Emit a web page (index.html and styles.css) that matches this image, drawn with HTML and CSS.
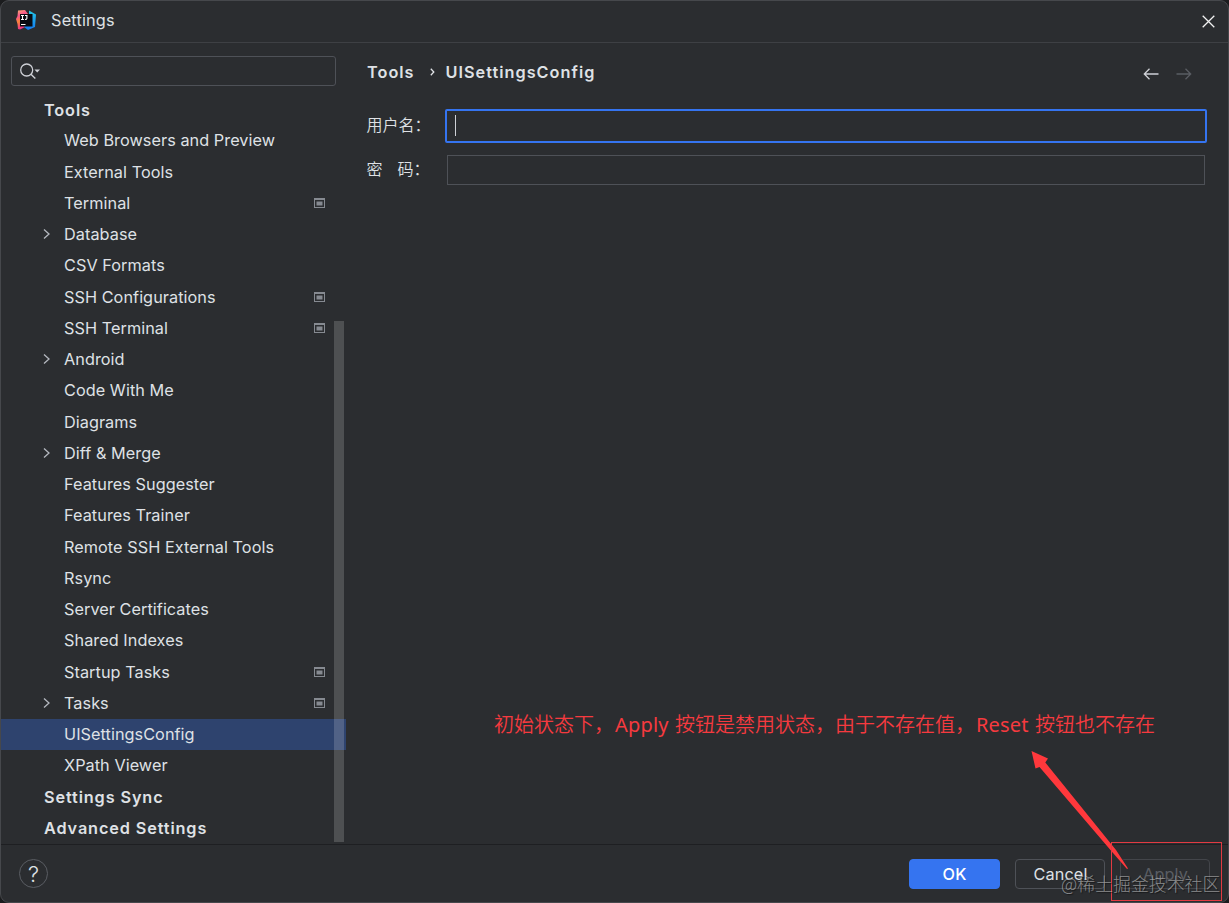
FILE: index.html
```html
<!DOCTYPE html>
<html lang="en">
<head>
<meta charset="utf-8">
<title>Settings</title>
<link rel="stylesheet" href="styles.css">
</head>
<body>
<svg class="defs" width="0" height="0">
  <symbol id="chevron" viewBox="0 0 10 12"><path d="M2 1.500 7 6 2 10.500" fill="none" stroke="#b4b8bf" stroke-width="1.300"/></symbol>
  <symbol id="project" viewBox="0 0 11 10"><path d="M0 0h11v10H0zM1 2v7h9V2z" fill="#868a91" fill-rule="evenodd"/><path d="M2.500 3.500h6v4h-6z" fill="#868a91"/></symbol>
</svg>
<div class="window">
  <header class="titlebar">
    <svg class="logo" viewBox="0 0 20 20">
      <defs>
        <linearGradient id="warm" x1="0" y1="0" x2="0.3" y2="1"><stop offset="0" stop-color="#fdb66c"/><stop offset=".35" stop-color="#f5548c"/><stop offset=".6" stop-color="#f98538"/><stop offset="1" stop-color="#ee2f8c"/></linearGradient>
        <linearGradient id="cool" x1="0" y1="0" x2="0" y2="1"><stop offset="0" stop-color="#23c8e8"/><stop offset="1" stop-color="#1479ef"/></linearGradient>
      </defs>
      <path d="M2 .5 9 0 12 4 11 16 4 19.500 2 19 1.500 14 0 9 1.500 6z" fill="url(#warm)"/>
      <path d="M13 .5 20 4.500 19 17 12 20 8 17 13 10z" fill="url(#cool)"/>
      <path d="M4 4h12.500v12.500H4z" fill="#080b12"/>
      <path d="M5 5.500H8M6.500 5.500V9.500M5 9.500H8M9 5.500H11.500M10.900 5.500V8.500q0 1-1.900 1M5 14.500H9.500" fill="none" stroke="#fff" stroke-width="1.100"/>
    </svg>
    <span class="title">Settings</span>
    <svg class="close" viewBox="0 0 13 13"><path d="M.7.7 12.300 12.300M12.300.7.7 12.300" stroke="#f2f2f2" stroke-width="1.300"/></svg>
  </header>
  <main class="body">
    <aside class="sidebar">
      <div class="search"><svg viewBox="0 0 22 18"><circle cx="7.700" cy="7" r="6" fill="none" stroke="#ced0d6" stroke-width="1.300"/><path d="m12 11.300 4.300 4.300" stroke="#ced0d6" stroke-width="1.400"/><path d="M15.500 6.500H21L18.200 9.500z" fill="#ced0d6"/></svg></div>
      <div class="tree">
        <div class="row group first"><span>Tools</span></div>
        <div class="row"><span>Web Browsers and Preview</span></div>
        <div class="row"><span>External Tools</span></div>
        <div class="row"><span>Terminal</span><svg class="mark"><use href="#project"/></svg></div>
        <div class="row parent"><svg class="chev"><use href="#chevron"/></svg><span>Database</span></div>
        <div class="row"><span>CSV Formats</span></div>
        <div class="row"><span>SSH Configurations</span><svg class="mark"><use href="#project"/></svg></div>
        <div class="row"><span>SSH Terminal</span><svg class="mark"><use href="#project"/></svg></div>
        <div class="row parent"><svg class="chev"><use href="#chevron"/></svg><span>Android</span></div>
        <div class="row"><span>Code With Me</span></div>
        <div class="row"><span>Diagrams</span></div>
        <div class="row parent"><svg class="chev"><use href="#chevron"/></svg><span>Diff &amp; Merge</span></div>
        <div class="row"><span>Features Suggester</span></div>
        <div class="row"><span>Features Trainer</span></div>
        <div class="row"><span>Remote SSH External Tools</span></div>
        <div class="row"><span>Rsync</span></div>
        <div class="row"><span>Server Certificates</span></div>
        <div class="row"><span>Shared Indexes</span></div>
        <div class="row"><span>Startup Tasks</span><svg class="mark"><use href="#project"/></svg></div>
        <div class="row parent"><svg class="chev"><use href="#chevron"/></svg><span>Tasks</span><svg class="mark"><use href="#project"/></svg></div>
        <div class="row selected"><span>UISettingsConfig</span></div>
        <div class="row"><span>XPath Viewer</span></div>
        <div class="row group"><span>Settings Sync</span></div>
        <div class="row group"><span>Advanced Settings</span></div>
        <div class="scrollbar"></div>
      </div>
    </aside>
    <section class="content">
      <div class="crumbs">
        <span>Tools</span>
        <svg class="sep" viewBox="0 0 5 8"><path d="m.8.8 3 3.200-3 3.200" fill="none" stroke="#dfe1e5" stroke-width="1.300"/></svg>
        <span>UISettingsConfig</span>
        <svg class="nav" viewBox="0 0 16 12"><path d="M15.500 6H1.500M6.500.8 1.300 6l5.200 5.200" fill="none" stroke="#ced0d6" stroke-width="1.300"/></svg>
        <svg class="nav off" viewBox="0 0 16 12"><path d="M.5 6h14M9.500.8 14.700 6l-5.200 5.200" fill="none" stroke="#5a5d63" stroke-width="1.300"/></svg>
      </div>
      <div class="field"><label>用户名：</label><div class="input focused"><i class="caret"></i></div></div>
      <div class="field second"><label>密<span class="gap"></span>码：</label><div class="input"></div></div>
    </section>
  </main>
  <footer class="footer">
    <div class="help"><span>?</span></div>
    <div class="btn ok">OK</div>
    <div class="btn cancel">Cancel</div>
    <div class="btn disabled">Apply</div>
  </footer>
  <div class="note">初始状态下，<span class="latin">Apply</span> 按钮是禁用状态，由于不存在值，<span class="latin">Reset</span> 按钮也不存在</div>
  <svg class="arrow" viewBox="0 0 100 120"><path d="M1.500 1 18 8.500 15.300 12.500 86 100 98 118.500 97 119 83 103 9.500 17 5.500 18.500z" fill="#ff383c"/></svg>
  <div class="highlight"></div>
  <div class="watermark">@稀土掘金技术社区</div>
</div>
</body>
</html>
```
FILE: styles.css
```css
* { box-sizing: border-box; }
body {
  margin: 0;
  background: #1b1c1e;
  color: #dfe1e5;
  font: 16.250px/20px Inter, "Noto Sans CJK SC", sans-serif;
  letter-spacing: 0.050px;
}
svg { display: block; flex: none; }
.defs { position: absolute; }
.window {
  position: relative;
  display: flex;
  flex-direction: column;
  width: 1229px;
  height: 903px;
  overflow: hidden;
  background: #2b2d30;
  border: 1px solid #46484c;
  border-radius: 9px;
}
.titlebar {
  display: flex;
  align-items: center;
  height: 42px;
  padding: 0 13.500px 4px 15px;
  border-bottom: 1px solid #3e4044;
}
.logo { width: 20px; height: 20px; }
.title { margin-left: 15px; flex: 1; letter-spacing: 0.2px; }
.close { width: 13px; height: 13px; margin-top: 3px; }
.body { display: flex; height: 801px; }
.sidebar { width: 345px; padding-top: 13px; }
.search {
  width: 325px;
  height: 30px;
  margin-left: 10px;
  padding: 6px 7px;
  border: 1px solid #4e5157;
  border-radius: 3px;
}
.search svg { width: 22px; height: 18px; }
.tree { position: relative; margin-top: 8px; }
.row {
  display: flex;
  align-items: center;
  height: 31.250px;
  padding: 0 21px 0.800px 63px;
  white-space: nowrap;
}
.group { padding-left: 43px; font-weight: 560; letter-spacing: 0.880px; }
.first { padding-bottom: 0; }
.parent { padding-left: 41px; }
.chev { width: 10px; height: 12px; margin-right: 12px; }
.mark { width: 11px; height: 10px; margin-left: auto; }
.selected { background: #2e436e; }
.scrollbar {
  position: absolute;
  top: 227px;
  right: 2px;
  width: 10px;
  height: 521px;
  background: rgba(255, 255, 255, 0.17);
}
.content { flex: 1; padding: 18px 23px 0 20px; }
.crumbs {
  display: flex;
  align-items: center;
  height: 22px;
  padding-left: 1px;
  font-weight: 560;
  letter-spacing: 1.020px;
}
.sep { width: 5px; height: 8px; margin: 0 11px 0 15px; }
.nav { width: 16px; height: 12px; margin: 3px 17px 0 auto; }
.nav.off { margin: 3px 13px 0 0; }
.field { display: flex; align-items: center; height: 34px; margin-top: 26px; }
.field.second { margin-top: 10px; }
.field label {
  width: 81px;
  padding: 0 0 4px 0.500px;
  font: 350 16px/20px "Noto Sans CJK SC", sans-serif;
  letter-spacing: 0;
  white-space: nowrap;
}
.gap { display: inline-block; width: 15px; }
.input { flex: 1; height: 30px; border: 1px solid #4e5157; }
.input.focused {
  height: 34px;
  margin: 0 -2px;
  padding: 4px 8px;
  border: 2px solid #3574f0;
  border-radius: 2px;
}
.caret { display: block; width: 1px; height: 21px; background: #ced0d6; }
.footer {
  display: flex;
  align-items: center;
  gap: 15px;
  height: 58px;
  padding: 0 18px;
  border-top: 1px solid #1e1f22;
}
.help {
  display: flex;
  align-items: center;
  justify-content: center;
  width: 29px;
  height: 29px;
  margin-right: auto;
  border: 1px solid #5a5d63;
  border-radius: 50%;
  font-size: 22px;
  font-weight: 300;
  letter-spacing: 0;
}
.btn {
  width: 90px;
  height: 30px;
  border: 1px solid #4e5157;
  border-radius: 4px;
  line-height: 29px;
  text-align: center;
  letter-spacing: 0.1px;
}
.cancel, .disabled { padding-left: 1px; }
.ok { width: 91px; background: #3574f0; border-color: #3574f0; color: #fff; font-weight: 500; }
.disabled { border-color: #43454a; color: #5a5d63; }
.note {
  position: absolute;
  left: 493px;
  top: 710px;
  color: #f63a3f;
  font: 350 20px/28px "Noto Sans", "Noto Sans CJK SC", sans-serif;
  letter-spacing: 0;
  white-space: nowrap;
}
.latin { margin: 0 1px; font-weight: 400; letter-spacing: 0.200px; }
.arrow { position: absolute; left: 1029px; top: 749px; width: 100px; height: 120px; }
.highlight {
  position: absolute;
  left: 1110px;
  top: 841px;
  width: 111px;
  height: 59px;
  border: 1px solid #e23a42;
}
.watermark {
  position: absolute;
  left: 1060px;
  top: 870px;
  color: rgba(205, 205, 205, 0.6);
  font: 300 17.900px/24px "Noto Sans CJK SC", sans-serif;
  letter-spacing: 0;
  text-shadow: 1px 1px 1px rgba(0, 0, 0, 0.5);
  white-space: nowrap;
}
```
